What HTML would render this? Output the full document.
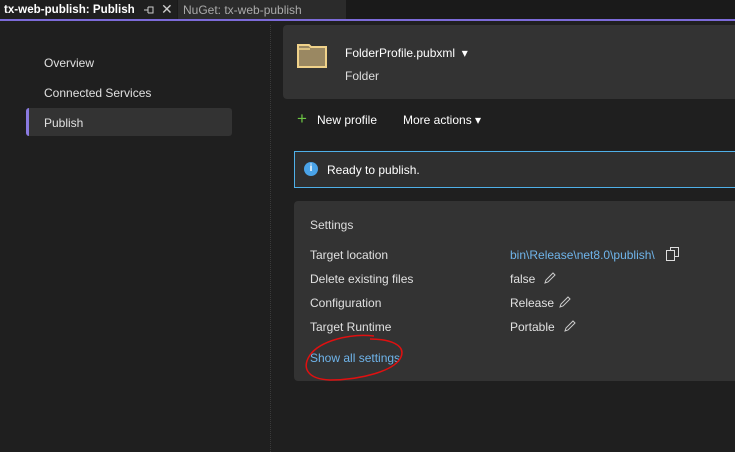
<!DOCTYPE html>
<html><head><style>
*{margin:0;padding:0;box-sizing:border-box}
body{width:735px;height:452px;background:#1f1f1f;font-family:"Liberation Sans",sans-serif;font-size:12px;color:#e0e0e0;position:relative;overflow:hidden}
.a{position:absolute;white-space:nowrap}
.link{color:#6fb4ea}
</style></head><body>
<div class="a" style="left:0;top:0;width:735px;height:20px;background:#1a1a1a"></div>
<div class="a" style="left:0;top:0;width:177px;height:20px;background:#1f1f1f"></div>
<div class="a" style="left:4px;top:3px;font-weight:bold;font-size:11.6px;color:#fff">tx-web-publish: Publish</div>
<svg class="a" style="left:144px;top:6px" width="10" height="8"><path d="M0 4h4M4 1v6M4 1h5v6H4" fill="none" stroke="#ccc"/></svg>
<div class="a" style="left:161px;top:1px;font-size:14px;color:#ccc">✕</div>
<div class="a" style="left:178px;top:0;width:168px;height:20px;background:#2b2b2b"></div>
<div class="a" style="left:183px;top:3px;color:#aaa">NuGet: tx-web-publish</div>
<div class="a" style="left:0;top:19px;width:735px;height:2px;background:#7c6bd9"></div>
<div class="a" style="left:44px;top:56px">Overview</div>
<div class="a" style="left:44px;top:86px">Connected Services</div>
<div class="a" style="left:26px;top:108px;width:206px;height:28px;background:#333;border-radius:3px;border-left:3px solid #8a7ae0"></div>
<div class="a" style="left:44px;top:116px">Publish</div>
<div class="a" style="left:270px;top:25px;width:1px;height:427px;border-left:1px dotted #3a3a3a"></div>
<div class="a" style="left:283px;top:25px;width:460px;height:74px;background:#333;border-radius:4px"></div>
<svg class="a" style="left:297px;top:44px" width="30" height="24"><path d="M1 1h11l2 2h15v20H1z" fill="#9a8862" stroke="#f0d28a" stroke-width="2"/><path d="M1 5h12" stroke="#f0d28a" stroke-width="1.5"/></svg>
<div class="a" style="left:345px;top:46px;color:#fff">FolderProfile.pubxml &nbsp;▾</div>
<div class="a" style="left:345px;top:69px;color:#ddd">Folder</div>
<div class="a" style="left:297px;top:111px;color:#6cc644;font-size:17px;line-height:16px">+</div>
<div class="a" style="left:317px;top:113px;color:#fff">New profile</div>
<div class="a" style="left:403px;top:113px;color:#fff">More actions ▾</div>
<div class="a" style="left:294px;top:151px;width:450px;height:37px;background:#2f2f2f;border:1px solid #4fb0e8"></div>
<div class="a" style="left:304px;top:162px;width:14px;height:14px;border-radius:50%;background:#4aa3e8;color:#fff;font-size:10px;font-weight:bold;text-align:center;line-height:14px">i</div>
<div class="a" style="left:327px;top:163px;color:#fff">Ready to publish.</div>
<div class="a" style="left:294px;top:201px;width:450px;height:180px;background:#333;border-radius:4px"></div>
<div class="a" style="left:310px;top:218px;color:#ddd">Settings</div>
<div class="a" style="left:310px;top:248px">Target location</div>
<div class="a" style="left:310px;top:272px">Delete existing files</div>
<div class="a" style="left:310px;top:296px">Configuration</div>
<div class="a" style="left:310px;top:320px">Target Runtime</div>
<div class="a link" style="left:510px;top:248px">bin\Release\net8.0\publish\</div>
<svg class="a" style="left:666px;top:247px" width="14" height="14"><rect x="4.5" y="0.5" width="8" height="9" fill="none" stroke="#ddd"/><rect x="0.5" y="3.5" width="8" height="10" fill="#333" stroke="#ddd"/></svg>
<div class="a" style="left:510px;top:272px">false</div>
<div class="a" style="left:510px;top:296px">Release</div>
<div class="a" style="left:510px;top:320px">Portable</div>
<svg class="a" style="left:543px;top:271px" width="14" height="14"><path d="M2 12l1-3 7-7 2 2-7 7z" fill="none" stroke="#ccc"/></svg>
<svg class="a" style="left:558px;top:295px" width="14" height="14"><path d="M2 12l1-3 7-7 2 2-7 7z" fill="none" stroke="#ccc"/></svg>
<svg class="a" style="left:563px;top:319px" width="14" height="14"><path d="M2 12l1-3 7-7 2 2-7 7z" fill="none" stroke="#ccc"/></svg>
<div class="a link" style="left:310px;top:351px">Show all settings</div>
<svg class="a" style="left:300px;top:333px" width="110" height="52"><path d="M74 3C50 0 20 8 10 22 2 34 6 46 30 47 60 47 95 38 101 24 106 12 90 6 70 6" fill="none" stroke="#e01010" stroke-width="1.5"/></svg>
</body></html>
